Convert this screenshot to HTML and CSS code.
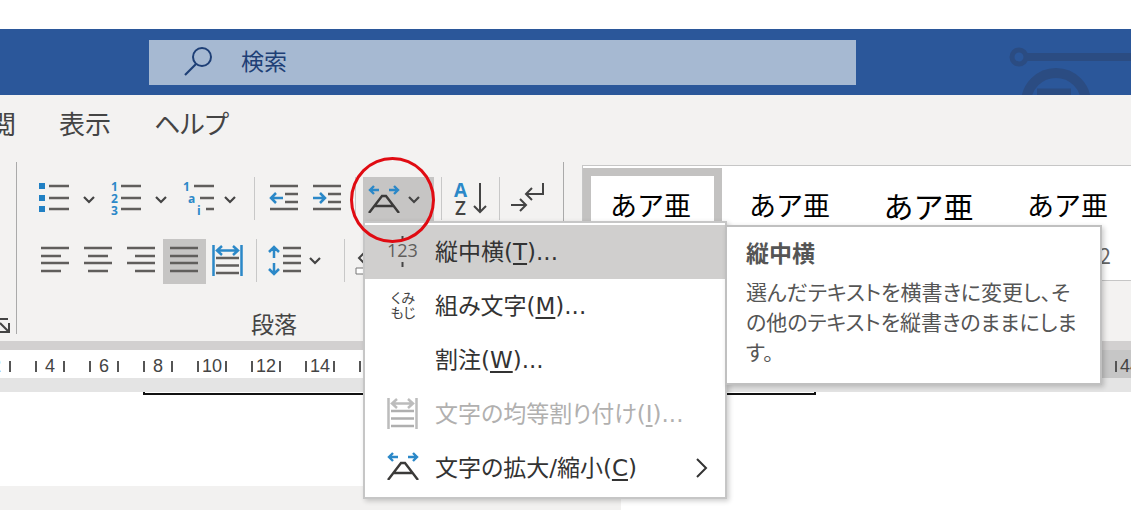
FILE: index.html
```html
<!DOCTYPE html>
<html lang="ja">
<head>
  <meta charset="UTF-8" />
  <meta name="viewport" content="width=device-width, initial-scale=1.0" />
  <title>縦中横</title>
  <link rel="stylesheet" href="styles.css">
</head>
<body>
  <svg class="defs" width="0" height="0" aria-hidden="true">
    <symbol id="chevron" viewBox="0 0 12 8"><path d="M1 1l5 5 5-5" fill="none" stroke="#444" stroke-width="2.2"/></symbol>
    <symbol id="scale" viewBox="0 0 32 28">
      <path d="M2 5h9M6 1L2 5l4 4M21 5h9M26 1l4 4-4 4" fill="none" stroke="#2b88c8" stroke-width="2.4"/>
      <path d="M1 28L14 11h4l13 17M7 21h18" fill="none" stroke="#3b3a39" stroke-width="2.4"/>
    </symbol>
    <symbol id="distribute" viewBox="0 0 31 32">
      <path class="accent" d="M1.5 0v31M29.500 0v31M6 5.500h19M10 1L5 5.500l5 4.500M21 1l5 4.500-5 4.500"/>
      <path class="rule" d="M4 13h23M4 20.500h23M4 28h23"/>
    </symbol>
  </svg>

  <div class="window">
    <header class="titlebar">
      <label class="search">
        <svg width="30" height="32" viewBox="0 0 30 32"><circle cx="18" cy="12" r="9" fill="none" stroke="#1e3f76" stroke-width="2"/><path d="M12 19L1 30" stroke="#1e3f76" stroke-width="2.2"/></svg>
        <input type="text" placeholder="検索" aria-label="検索">
      </label>
      <svg class="circuit" width="124" height="66" viewBox="0 0 124 66" fill="none" stroke="#2b4c82">
        <circle cx="12" cy="28" r="7" stroke-width="5"/>
        <path d="M20 28h104" stroke-width="8"/>
        <circle cx="49" cy="74" r="30" stroke-width="10"/>
        <path d="M30 63h34" stroke-width="7"/>
      </svg>
    </header>

    <nav class="tabs">
      <a href="#">閲</a>
      <a href="#">表示</a>
      <a href="#">ヘルプ</a>
    </nav>

    <div class="ribbon">
      <div class="group group-font">
        <svg width="10" height="16" viewBox="0 0 10 16" fill="none" stroke="#444" stroke-width="2"><path d="M0 1h8M0 5l8 8M9 5v9H0"/></svg>
      </div>

      <div class="group group-paragraph">
        <div class="row">
          <button class="tool split" aria-label="箇条書き">
            <svg width="73" height="45"><path d="M11 6h6v6h-6zM11 18h6v6h-6zM11 29h6v6h-6z" fill="#2080c4"/><path class="rule" d="M21 9h20M21 21h20M21 32h20"/><use href="#chevron" x="55" y="19" width="12" height="8"/></svg>
          </button>
          <button class="tool split" aria-label="段落番号">
            <svg width="73" height="45"><g class="digits"><text x="10" y="14">1</text><text x="10" y="26">2</text><text x="10" y="38">3</text></g><path class="rule" d="M20 9h20M20 21h20M20 32h20"/><use href="#chevron" x="54" y="19" width="12" height="8"/></svg>
          </button>
          <button class="tool split" aria-label="アウトライン">
            <svg width="73" height="45"><g class="digits"><text x="9" y="14">1</text><text x="14" y="26">a</text><text x="23" y="38">i</text></g><path class="rule" d="M20 9h20M26 21h14M32 32h8"/><use href="#chevron" x="50" y="19" width="12" height="8"/></svg>
          </button>
          <span class="sep"></span>
          <button class="tool" aria-label="インデントを減らす">
            <svg width="43" height="45"><path class="rule" d="M8 9h28M23 17h13M23 25h13M8 32h28"/><path class="accent" d="M9 21h12M14 16l-5 5 5 5"/></svg>
          </button>
          <button class="tool" aria-label="インデントを増やす">
            <svg width="43" height="45"><path class="rule" d="M8 9h28M23 17h13M23 25h13M8 32h28"/><path class="accent" d="M8 21h12M15 16l5 5-5 5"/></svg>
          </button>
          <span class="sep"></span>

          <div class="dropdown">
            <button class="tool open" aria-label="拡張書式">
              <svg width="71" height="45"><use href="#scale" x="5" y="8" width="32" height="28"/><use href="#chevron" x="45" y="19" width="12" height="8"/></svg>
            </button>
            <div class="menu">
              <button class="item current">
                <svg width="32" height="32" viewBox="0 0 32 32"><path d="M15.500 0v5M15.500 26v5" stroke="#444" stroke-width="2"/><text x="0" y="21" font-size="18">123</text></svg>
                <span>縦中横(<u>T</u>)...</span>
              </button>
              <button class="item">
                <svg class="kana" width="32" height="32" viewBox="0 0 32 32"><text x="16" y="13">くみ</text><text x="16" y="28">もじ</text></svg>
                <span>組み文字(<u>M</u>)...</span>
              </button>
              <button class="item">
                <svg width="32" height="32"></svg>
                <span>割注(<u>W</u>)...</span>
              </button>
              <button class="item" disabled>
                <svg class="off" width="32" height="32"><use href="#distribute" width="31" height="32"/></svg>
                <span>文字の均等割り付け(<u>I</u>)...</span>
              </button>
              <button class="item">
                <svg width="32" height="32"><use href="#scale" width="32" height="28"/></svg>
                <span>文字の拡大/縮小(<u>C</u>)</span>
                <svg class="more" width="12" height="20"><path d="M1 1l9 9-9 9" fill="none" stroke="#333" stroke-width="2"/></svg>
              </button>
              <div class="tooltip">
                <b>縦中横</b>
                <p>選んだテキストを横書きに変更し、そ<br>の他のテキストを縦書きのままにしま<br>す。</p>
              </div>
            </div>
            <span class="mark"></span>
          </div>

          <span class="sep"></span>
          <button class="tool" aria-label="並べ替え">
            <svg width="43" height="45"><text x="5" y="20" class="sort-a">A</text><text x="6" y="38" class="sort-z">Z</text><path class="dark" d="M31 6v29M25 29l6 6 6-6"/></svg>
          </button>
          <span class="sep"></span>
          <button class="tool" aria-label="編集記号">
            <svg width="43" height="45"><path class="dark" d="M36 6v11H20M25 11l-6 6 6 6M4 28h15M13 22l6 6-6 6"/></svg>
          </button>
        </div>

        <div class="row">
          <button class="tool tool-indent" aria-label="左揃え"><svg width="43" height="45"><path class="rule" d="M7 9h28M7 17h20M7 24h28M7 32h20"/></svg></button>
          <button class="tool" aria-label="中央揃え"><svg width="43" height="45"><path class="rule" d="M7 9h28M11 17h20M7 24h28M11 32h20"/></svg></button>
          <button class="tool" aria-label="右揃え"><svg width="43" height="45"><path class="rule" d="M7 9h28M15 17h20M7 24h28M15 32h20"/></svg></button>
          <button class="tool open" aria-label="両端揃え"><svg width="43" height="45"><path class="rule" d="M7 9h28M7 17h28M7 24h28M7 32h28"/></svg></button>
          <button class="tool" aria-label="均等割り付け"><svg width="43" height="45"><use href="#distribute" x="6" y="6" width="31" height="32"/></svg></button>
          <span class="sep"></span>
          <button class="tool split" aria-label="行間">
            <svg width="73" height="45"><path class="rule" d="M19 9h18M19 17h18M19 24h18M19 32h18"/><path class="accent" d="M10 8v11M5 13l5-5 5 5M10 24v11M5 30l5 5 5-5"/><use href="#chevron" x="45" y="18" width="12" height="8"/></svg>
          </button>
          <span class="sep"></span>
          <button class="tool" aria-label="塗りつぶし"><svg width="43" height="45"><path class="dark" d="M13 13l-6 6 6 6"/><path d="M4 29h28v6H4z" fill="#fff" stroke="#777"/></svg></button>
        </div>
        <div class="group-name">段落</div>
      </div>

      <div class="gallery">
        <button class="style selected">あア亜</button>
        <button class="style">あア亜</button>
        <button class="style heading-1">あア亜</button>
        <button class="style heading-2">あア亜 <small>2</small></button>
      </div>
    </div>

    <div class="ruler">
      <span>2</span><span>4</span><span>6</span><span>8</span><span>10</span><span>12</span><span>14</span><span>16</span><span>18</span><span>20</span><span>22</span><span>24</span><span>26</span><span>28</span><span>30</span><span class="out">32</span><span class="out">34</span><span class="out">36</span><span class="out">38</span><span class="out">40</span><span class="out">42</span><span class="out">44</span>
    </div>

    <main class="page">
      <div class="table-edge"></div>
    </main>
    <footer class="status"></footer>
  </div>
</body>
</html>
```
FILE: styles.css
```css
* {
  box-sizing: border-box;
}

body {
  margin: 0;
  padding: 29px 15px 0 0;
  background: #fff;
  color: #444;
  font-family: "DejaVu Sans", "Noto Sans CJK JP", sans-serif;
  font-feature-settings: "palt";
  font-size: 23px;
  line-height: 30px;
}

button, input {
  font: inherit;
  font-feature-settings: inherit;
  color: inherit;
}

button {
  border: 0;
  padding: 0;
  background: none;
}

svg {
  display: block;
  flex: none;
}

.defs {
  position: absolute;
}

.window {
  overflow: hidden;
}

/* title bar */
.titlebar {
  display: flex;
  justify-content: space-between;
  height: 66px;
  padding-left: 149px;
  background: #2b579a;
}

.search {
  display: flex;
  flex: 0 1 707px;
  height: 45px;
  margin-top: 11px;
  padding: 5px 0 0 35px;
  background: #a6b9d2;
}

.search input {
  width: 100%;
  height: 34px;
  margin-left: 27px;
  padding: 0;
  border: 0;
  background: none;
}

.search input::placeholder {
  color: #1e3f76;
  opacity: 1;
}

/* tabs */
.tabs {
  display: flex;
  gap: 43px;
  height: 67px;
  margin-left: -10px;
  padding-top: 15px;
  font-size: 26px;
}

.tabs a {
  color: #444;
  text-decoration: none;
}

.tabs,
.ribbon {
  background: #f3f2f1;
}

/* ribbon */
.ribbon {
  display: flex;
  align-items: flex-start;
  height: 179px;
}

.group {
  flex: none;
  height: 172px;
  border-right: 1px solid #aaa;
}

.group-font {
  width: 17px;
  padding-top: 156px;
}

.group-paragraph {
  width: 547px;
  padding-top: 15px;
}

.row {
  display: flex;
  height: 62px;
  padding-left: 11px;
}

.tool {
  flex: none;
  width: 43px;
  height: 45px;
}

.split {
  width: 73px;
}

.tool-indent {
  margin-left: 6px;
}

.open {
  background: #c6c5c4;
}

.sep {
  flex: none;
  width: 1px;
  height: 43px;
  margin: 0 7px;
  background: #c8c8c8;
}

.rule {
  fill: none;
  stroke: #605e5c;
  stroke-width: 2.5;
}

.accent {
  fill: none;
  stroke: #2b88c8;
  stroke-width: 2.5;
}

.dark {
  fill: none;
  stroke: #444;
  stroke-width: 2;
}

.digits {
  fill: #2b88c8;
  font: bold 12px "Open Sans", sans-serif;
}

.sort-a {
  fill: #2b88c8;
  font: bold 19px "Open Sans", sans-serif;
}

.sort-z {
  fill: #444;
  font: 600 19px "Open Sans", sans-serif;
}

.group-name {
  padding: 9px 32px 0 0;
  text-align: center;
}

/* drop-down menu */
.dropdown {
  position: relative;
  z-index: 2;
}

.dropdown > .tool {
  width: 71px;
}

.menu {
  position: absolute;
  top: 44px;
  left: 0;
  width: 364px;
  padding: 2px 0;
  border: 2px solid #c6c6c6;
  background: #fff;
  color: #333;
  box-shadow: 2px 2px 5px rgba(0, 0, 0, 0.2);
}

.item {
  display: flex;
  align-items: center;
  width: 100%;
  height: 54px;
  padding: 0 17px 0 22px;
  text-align: left;
}

.item span {
  flex: 1;
  margin-left: 16px;
  white-space: nowrap;
}

.item u {
  text-decoration-thickness: 2px;
  text-underline-offset: 3px;
}

.item text {
  fill: #605e5c;
  font-family: "Open Sans", sans-serif;
}

.item .kana text {
  fill: #444;
  font-family: "Noto Sans CJK JP", sans-serif;
  font-size: 14px;
  text-anchor: middle;
}

.current {
  background: #d0cfce;
}

.item:disabled {
  color: #b1b0af;
}

.off {
  filter: grayscale(1) opacity(0.5);
}

.tooltip {
  position: absolute;
  top: 2px;
  left: 360px;
  width: 377px;
  height: 160px;
  padding: 12px 0 0 19px;
  border: 2px solid #c0c0c0;
  background: #fff;
  color: #555;
  box-shadow: 2px 2px 5px rgba(0, 0, 0, 0.2);
  white-space: nowrap;
}

.tooltip b {
  display: block;
}

.tooltip p {
  margin: 9px 0 0;
  font-size: 21px;
}

.mark {
  position: absolute;
  top: -20px;
  left: -13px;
  width: 85px;
  height: 86px;
  border: 3px solid #e00b12;
  border-radius: 50%;
}

/* styles */
.gallery {
  display: flex;
  flex: 1;
  height: 116px;
  margin: 3px 0 0 18px;
  padding-top: 2px;
  border: 1px solid #c6c6c6;
  border-right: 0;
  background: #fff;
  overflow: hidden;
}

.style {
  position: relative;
  flex: none;
  width: 139px;
  padding: 0 4px 38px 0;
  color: #000;
  font-family: "Noto Sans CJK JP", sans-serif;
  font-feature-settings: normal;
  font-size: 27px;
}

.selected {
  border: 8px solid #c3c2c1;
}

.heading-1 {
  font-size: 30px;
}

.style small {
  position: absolute;
  right: 28px;
  bottom: 10px;
  color: #666;
  font-size: 21px;
}

/* ruler */
.ruler {
  display: flex;
  height: 51px;
  border-top: 9px solid #d2d0d0;
  border-bottom: 14px solid #e4e4e4;
  font: 18px/32px "Liberation Sans", sans-serif;
}

.ruler span {
  display: flex;
  flex: none;
  align-items: center;
  justify-content: space-between;
  width: 54px;
  padding: 4px 12px 0;
}

.ruler span:first-child {
  margin-left: -31px;
}

.ruler span::before,
.ruler span::after {
  content: "";
  width: 2px;
  height: 11px;
  background: #555;
}

.ruler .out {
  background: #c6c6c6;
}

/* document */
.page {
  height: 94px;
}

.table-edge {
  width: 673px;
  height: 3px;
  margin-left: 143px;
  border: solid #111;
  border-width: 0 2px 2px;
}

.status {
  width: 621px;
  height: 24px;
  background: #f2f1f0;
}
```
